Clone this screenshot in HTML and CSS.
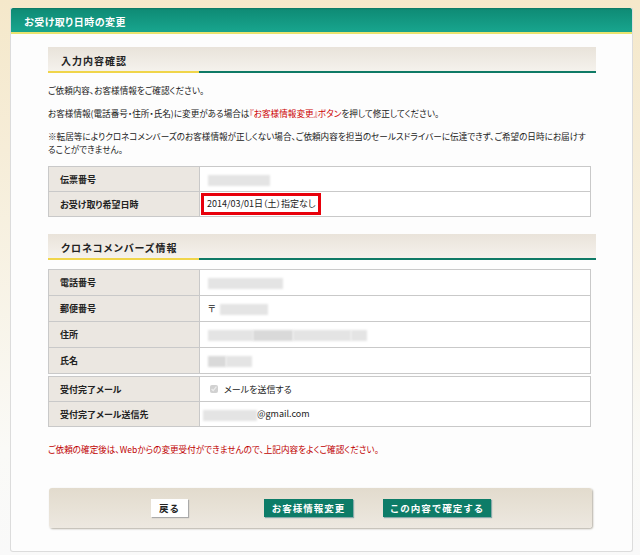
FILE: index.html
```html
<!DOCTYPE html>
<html lang="ja">
<head>
    <meta charset="UTF-8">
    <title>お受け取り日時の変更</title>
    <link rel="stylesheet" href="styles.css">
</head>
<body>

    <!-- Main Panel -->
    <div class="panel">
        <h1 class="panel-title">お受け取り日時の変更</h1>

        <div class="panel-body">
            <!-- Input Confirmation -->
            <h2 class="section-title">入力内容確認</h2>

            <p class="note">ご依頼内容、お客様情報をご確認ください。</p>
            <p class="note">お客様情報(電話番号・住所・氏名)に変更がある場合は<span class="red">『お客様情報変更』ボタン</span>を押して修正してください。</p>
            <p class="note">※転居等によりクロネコメンバーズのお客様情報が正しくない場合、ご依頼内容を担当のセールスドライバーに伝達できず、ご希望の日時にお届けすることができません。</p>

            <table class="info-table">
                <tr>
                    <th>伝票番号</th>
                    <td><span class="blur" style="width: 62px;"></span></td>
                </tr>
                <tr>
                    <th>お受け取り希望日時</th>
                    <td class="highlight-cell"><span class="highlight">2014/03/01日（土）指定なし</span></td>
                </tr>
            </table>

            <!-- Member Info -->
            <h2 class="section-title section-title-2">クロネコメンバーズ情報</h2>

            <table class="info-table tall">
                <tr>
                    <th>電話番号</th>
                    <td><span class="blur" style="width: 75px;"></span></td>
                </tr>
                <tr>
                    <th>郵便番号</th>
                    <td>〒<span class="blur" style="width: 48px; margin-left: 4px;"></span></td>
                </tr>
                <tr>
                    <th>住所</th>
                    <td><span class="blur" style="width: 45px;"></span><span class="blur dark" style="width: 40px;"></span><span class="blur" style="width: 58px;"></span><span class="blur" style="width: 16px;"></span></td>
                </tr>
                <tr>
                    <th>氏名</th>
                    <td><span class="blur dark" style="width: 18px;"></span><span class="blur" style="width: 26px;"></span></td>
                </tr>
            </table>

            <table class="info-table mail-table">
                <tr>
                    <th>受付完了メール</th>
                    <td><label class="check"><input type="checkbox" checked disabled> メールを送信する</label></td>
                </tr>
                <tr>
                    <th>受付完了メール送信先</th>
                    <td class="mail-cell"><span class="blur" style="width: 54px;"></span>@gmail.com</td>
                </tr>
            </table>

            <p class="warning">ご依頼の確定後は、Webからの変更受付ができませんので、上記内容をよくご確認ください。</p>

            <!-- Buttons -->
            <div class="button-bar">
                <button class="btn btn-back">戻る</button>
                <button class="btn btn-green btn-change">お客様情報変更</button>
                <button class="btn btn-green btn-confirm">この内容で確定する</button>
            </div>
        </div>
    </div>

</body>
</html>
```

FILE: styles.css
```css
/* General Reset */
* {
    margin: 0;
    padding: 0;
    box-sizing: border-box;
}

body {
    font-family: "Noto Sans CJK JP", "Liberation Sans", sans-serif;
    font-size: 8.6px;
    color: #222;
    background: linear-gradient(to bottom, #f5e8ca 0px, #f6edd8 150px, #fafaf7 450px, #f9f9f9 555px);
    width: 640px;
    height: 555px;
    padding: 8px 7px 0 10px;
    overflow: hidden;
    font-feature-settings: "palt";
}

/* Main Panel */
.panel {
    background-color: #fdfdfd;
    border: 1px solid #dcdcdc;
    border-top: none;
    border-radius: 0 0 3px 3px;
    height: 544px;
}

.panel-title {
    font-size: 10px;
    font-weight: bold;
    color: #fff;
    letter-spacing: 0.5px;
    height: 26px;
    padding: 6px 0 0 13px;
    background: linear-gradient(to bottom, #0b7763 0px, #0f8c76 2px, #17a38c 22px, #17a38c 23px);
    background-size: 100% 24px;
    background-repeat: no-repeat;
    background-color: #e9e36f;
    border-radius: 2px 2px 0 0;
}

.panel-body {
    padding: 13px 36px 0 37px;
}

/* Section Headings */
.section-title {
    font-size: 10px;
    font-weight: bold;
    letter-spacing: 1px;
    color: #222;
    height: 26px;
    padding: 6px 0 0 13px;
    background:
        linear-gradient(to right, #f0d54a 0px, #f0d54a 151px, #0f7a66 151px) bottom / 100% 2px no-repeat,
        linear-gradient(to bottom, #e9e3da, #f6f3ee);
}

.section-title-2 {
    margin-top: 17px;
}

/* Notes */
.note {
    line-height: 13px;
    margin-top: 10px;
    padding-right: 9px;
}

.section-title + .note {
    margin-top: 11px;
}

.red {
    color: #cc0000;
}

/* Tables */
.info-table {
    width: 543px;
    border-collapse: collapse;
    margin-top: 10px;
}

.info-table th,
.info-table td {
    border: 1px solid #c9c9c9;
    height: 25px;
    text-align: left;
    vertical-align: middle;
}

.info-table th {
    width: 151px;
    font-size: 9px;
    background-color: #ebe7e1;
    font-weight: bold;
    padding-left: 11px;
}

.info-table td {
    font-size: 9px;
    background-color: #fff;
    padding-left: 8px;
}

.info-table.tall {
    margin-top: 9px;
}

.info-table.tall th,
.info-table.tall td {
    height: 26px;
}

.mail-table {
    margin-top: 2px;
}

.mail-cell {
    padding-left: 3px !important;
}

.highlight-cell {
    padding-left: 1px !important;
}

.highlight {
    display: inline-block;
    border: 3px solid #e8000b;
    padding: 2px 3px;
    line-height: 12px;
}

/* Blurred values */
.blur {
    display: inline-block;
    height: 11px;
    background-color: #e4e4e4;
    vertical-align: middle;
    filter: blur(1px);
}

.blur.dark {
    background-color: #d9d9d9;
}

/* Checkbox */
.check {
    display: flex;
    align-items: center;
    gap: 6px;
    padding-left: 2px;
}

.check input {
    width: 8px;
    height: 8px;
    accent-color: #999;
}

/* Warning */
.warning {
    color: #c00000;
    margin-top: 16px;
    line-height: 13px;
}

/* Button Bar */
.button-bar {
    margin: 32px 4px 0 1px;
    height: 40px;
    display: flex;
    align-items: center;
    padding-left: 102px;
    border-radius: 3px;
    background: linear-gradient(to bottom, #e2dbcd, #ede8e0);
    box-shadow: 1px 1px 2px #b5b0a5;
}

.btn {
    font-family: inherit;
    font-size: 9.5px;
    font-weight: bold;
    height: 18px;
    border: none;
    cursor: pointer;
    letter-spacing: 1px;
    white-space: nowrap;
    padding: 0;
}

.btn-back {
    width: 37px;
    background-color: #fff;
    color: #222;
    box-shadow: 1px 1px 1px #aaa;
}

.btn-green {
    background-color: #0d7c68;
    color: #fff;
    box-shadow: 1px 1px 1px #8aa;
}

.btn-change {
    width: 89px;
    margin: 0 30px 0 76px;
}

.btn-confirm {
    width: 108px;
}
```
